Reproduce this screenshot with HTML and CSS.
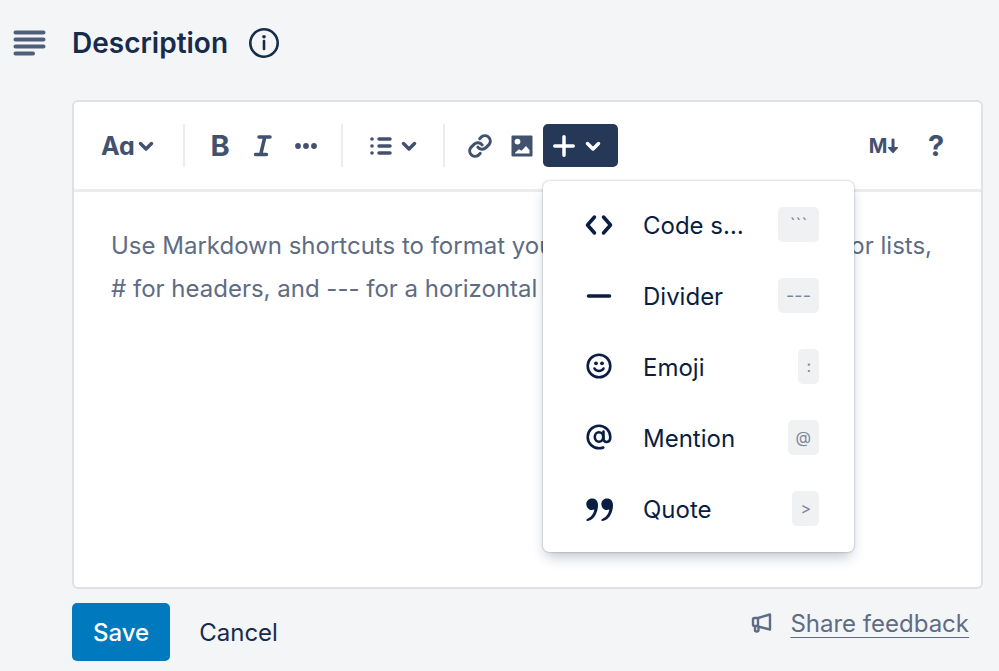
FILE: index.html
```html
<!DOCTYPE html>
<html lang="en">
  <head>
    <meta charset="utf-8">
    <title>Description</title>
    <link rel="stylesheet" href="styles.css">
  </head>
  <body>
    <main class="page">
      <header class="header">
        <svg class="header-icon" width="34" height="28" viewBox="0 0 34 28">
          <path d="M3.500 3.500H31.500M3.500 10.500H31.500M3.500 17.500H31.500M3.500 24.500H21"/>
        </svg>
        <h1><label for="description">Description</label></h1>
        <button type="button" class="info" aria-label="About descriptions">
          <svg width="32" height="32" viewBox="0 0 32 32">
            <circle class="line" cx="16" cy="16" r="13.700"/>
            <path class="line" d="M16 14V22"/>
            <circle cx="16" cy="9.800" r="1.800"/>
          </svg>
        </button>
      </header>

      <section class="content">
        <div class="editor">
          <div class="toolbar">
            <button type="button" class="tool split text-style" aria-label="Text styles">
              <span class="glyph">Aa</span>
              <svg class="chevron" width="16" height="12" viewBox="0 0 16 12"><path d="M2.500 3.500L8 9L13.500 3.500"/></svg>
            </button>
            <span class="separator"></span>
            <div class="group marks">
              <button type="button" class="tool" aria-label="Bold"><span class="glyph bold">B</span></button>
              <button type="button" class="tool" aria-label="Italic">
                <svg class="line" width="22" height="24" viewBox="0 0 22 24"><path d="M7 3H18M3.500 20.500H14.500M12.800 3L8.700 20.500"/></svg>
              </button>
              <button type="button" class="tool" aria-label="More formatting">
                <svg width="24" height="8" viewBox="0 0 24 8"><circle cx="4" cy="4" r="2.900"/><circle cx="12" cy="4" r="2.900"/><circle cx="20" cy="4" r="2.900"/></svg>
              </button>
            </div>
            <span class="separator"></span>
            <button type="button" class="tool split" aria-label="Lists">
              <svg width="22" height="20" viewBox="0 0 22 20">
                <circle cx="2" cy="3" r="1.800"/><circle cx="2" cy="10" r="1.800"/><circle cx="2" cy="17" r="1.800"/>
                <path class="line" d="M9 3H20M9 10H20M9 17H20"/>
              </svg>
              <svg class="chevron" width="16" height="12" viewBox="0 0 16 12"><path d="M2.500 3.500L8 9L13.500 3.500"/></svg>
            </button>
            <span class="separator"></span>
            <div class="group">
              <button type="button" class="tool" aria-label="Link">
                <svg class="link-icon line" width="26" height="26" viewBox="0 0 24 24">
                  <path d="M10 13a5 5 0 0 0 7.500.500l3-3a5 5 0 0 0-7-7l-1.700 1.700M14 11a5 5 0 0 0-7.500-.500l-3 3a5 5 0 0 0 7 7l1.700-1.700"/>
                </svg>
              </button>
              <button type="button" class="tool" aria-label="Image">
                <svg width="22" height="22" viewBox="0 0 22 22">
                  <path fill-rule="evenodd" d="M1.500 .500H20.500Q21.500 .500 21.500 1.500V20.500Q21.500 21.500 20.500 21.500H1.500Q.500 21.500 .500 20.500V1.500Q.500 .500 1.500 .500ZM6.500 3.700A2.900 2.900 0 1 0 6.500 9.500A2.900 2.900 0 1 0 6.500 3.700ZM4 18.500H18.500V15L15 11L10.500 15.800L8 14.200L4 17.700Z"/>
                </svg>
              </button>
            </div>
            <div class="insert">
              <button type="button" class="tool insert-button" aria-label="Insert" aria-expanded="true">
                <svg class="line" width="22" height="22" viewBox="0 0 22 22"><path d="M11 1.800V20.200M1.800 11H20.200"/></svg>
                <svg class="chevron" width="16" height="12" viewBox="0 0 16 12"><path d="M2.500 3.500L8 9L13.500 3.500"/></svg>
              </button>
              <div class="menu">
                <button type="button" class="menu-item">
                  <svg class="line" width="32" height="32" viewBox="0 0 32 32"><path d="M11.500 8L4.500 16L11.500 24M20.500 8L27.500 16L20.500 24"/></svg>
                  <span class="menu-label">Code snippet</span>
                  <kbd class="wide">```</kbd>
                </button>
                <button type="button" class="menu-item">
                  <svg class="line" width="32" height="32" viewBox="0 0 32 32"><path d="M5.500 16H26.500"/></svg>
                  <span class="menu-label">Divider</span>
                  <kbd class="wide">---</kbd>
                </button>
                <button type="button" class="menu-item">
                  <svg width="32" height="32" viewBox="0 0 32 32">
                    <circle class="thin" cx="16" cy="15" r="11.300"/>
                    <circle cx="13" cy="12.300" r="1.900"/><circle cx="19" cy="12.300" r="1.900"/>
                    <path class="thin" d="M11.500 17.500C13.300 20.800 18.700 20.800 20.500 17.500"/>
                  </svg>
                  <span class="menu-label">Emoji</span>
                  <kbd>:</kbd>
                </button>
                <button type="button" class="menu-item">
                  <svg width="32" height="32" viewBox="0 0 32 32">
                    <ellipse class="thin" cx="16" cy="15" rx="4.200" ry="4.700"/>
                    <path class="thin" d="M20.500 9.500V16.500C20.500 21.500 27.300 21.300 27.300 15A11.300 11.300 0 1 0 16 26.300Q18.500 26.300 20.300 25.500"/>
                  </svg>
                  <span class="menu-label">Mention</span>
                  <kbd>@</kbd>
                </button>
                <button type="button" class="menu-item">
                  <svg width="32" height="32" viewBox="0 0 32 32">
                    <path d="M9 5.500C12.800 5.500 15 8.200 15 12C15 20 10.500 27.500 4.500 28C3 28.100 2.900 26.300 4.200 25.900C7.500 24.900 10.500 21.500 11.300 16.600C7 18.200 3.300 15.500 3.300 11.300C3.300 8 5.700 5.500 9 5.500Z"/>
                    <path d="M24 5.500C27.800 5.500 30 8.200 30 12C30 20 25.500 27.500 19.500 28C18 28.100 17.900 26.300 19.200 25.900C22.500 24.900 25.500 21.500 26.300 16.600C22 18.200 18.300 15.500 18.300 11.300C18.300 8 20.700 5.500 24 5.500Z"/>
                  </svg>
                  <span class="menu-label">Quote</span>
                  <kbd>&gt;</kbd>
                </button>
              </div>
            </div>
            <div class="group help">
              <button type="button" class="tool" aria-label="Markdown">
                <span class="glyph markdown">M</span>
                <svg width="12" height="16" viewBox="0 0 12 16"><path d="M4.500 1.500Q4.500 .500 6 .500Q7.500 .500 7.500 1.500V9H10.500Q11.500 9.300 11 10L6.700 14.800Q6 15.500 5.300 14.800L1 10Q.500 9.300 1.500 9H4.500Z"/></svg>
              </button>
              <button type="button" class="tool" aria-label="Help"><span class="glyph question">?</span></button>
            </div>
          </div>
          <textarea id="description" placeholder="Use Markdown shortcuts to format your page as you type, like * for lists, # for headers, and --- for a horizontal rule."></textarea>
        </div>

        <footer class="actions">
          <button type="button" class="save">Save</button>
          <button type="button" class="cancel">Cancel</button>
          <div class="feedback">
            <svg width="22" height="22" viewBox="0 0 22 22"><path d="M7 5L19 1.500V16.500L7 13.500ZM7 5H3.500Q2 5 2 6.500V11.500Q2 13 3.500 13H7M4 13V17Q4 18.500 5.700 18.500Q7.500 18.500 7.500 17V13.500"/></svg>
            <a href="#">Share feedback</a>
          </div>
        </footer>
      </section>
    </main>
  </body>
</html>
```

FILE: styles.css
```css
* {
  box-sizing: border-box;
}

body {
  margin: 0;
  background-color: #f4f5f7;
  color: #172b4d;
  font-family: Inter, "Liberation Sans", sans-serif;
  font-size: 24px;
}

button {
  font: inherit;
  color: inherit;
  background: none;
  border: none;
  padding: 0;
  cursor: pointer;
}

svg {
  display: block;
  flex: none;
  fill: currentColor;
}

.line {
  fill: none;
  stroke: currentColor;
  stroke-width: 3.5;
  stroke-linecap: round;
  stroke-linejoin: round;
}

.page {
  padding: 25px 16px 10px 12px;
}

.header {
  display: flex;
  align-items: center;
  height: 36px;
}

.header-icon {
  margin-right: 26px;
  color: #505f79;
  stroke: currentColor;
  stroke-width: 4;
  stroke-linecap: round;
}

h1 {
  margin: 0;
  font-size: 28px;
  line-height: 36px;
  font-weight: 600;
}

.info {
  margin-left: 20px;
}

.info .line {
  stroke-width: 2.6;
}

.content {
  margin: 39px 0 0 60px;
}

.editor {
  background-color: #ffffff;
  border: 2px solid #dfe1e6;
  border-radius: 6px;
}

.toolbar {
  display: flex;
  align-items: center;
  height: 90px;
  padding: 0 24px 0 23px;
  border-bottom: 3px solid #ebecf0;
  color: #42526e;
}

.group {
  display: flex;
}

.marks {
  gap: 1px;
}

.tool {
  display: flex;
  align-items: center;
  justify-content: center;
  width: 42px;
  height: 43px;
  border-radius: 5px;
}

.split {
  width: 72px;
  gap: 9px;
}

.text-style {
  justify-content: flex-start;
  gap: 3px;
  padding-left: 4px;
  font-size: 25px;
  font-feature-settings: "cv11";
}

.chevron {
  fill: none;
  stroke: currentColor;
  stroke-width: 3.5;
  stroke-linecap: round;
  stroke-linejoin: round;
}

.link-icon {
  stroke-width: 2.8;
}

.separator {
  width: 2px;
  height: 43px;
  margin: 0 14px;
  background-color: #ebecf0;
}

.glyph {
  font-weight: 700;
  line-height: 30px;
}

.bold,
.question {
  font-size: 29px;
}

.markdown {
  font-size: 20px;
}

.insert {
  position: relative;
}

.insert-button {
  justify-content: flex-start;
  width: 75px;
  gap: 10px;
  padding-left: 10px;
  background-color: #253858;
  color: #ffffff;
}

.help {
  gap: 10px;
  margin-left: auto;
}

.menu {
  position: absolute;
  top: 57px;
  left: 0;
  width: 311px;
  padding: 8px 0;
  background-color: #ffffff;
  border-radius: 6px;
  box-shadow: 0 7px 14px -3px rgba(9, 30, 66, 0.28), 0 0 2px rgba(9, 30, 66, 0.4);
  color: #091e42;
}

.menu-item {
  display: flex;
  align-items: center;
  width: 100%;
  height: 71px;
  padding: 0 35px 0 40px;
  text-align: left;
}

.menu-label {
  flex: 1;
  min-width: 0;
  margin: 0 31px 0 28px;
  padding-top: 2px;
  overflow: hidden;
  text-overflow: ellipsis;
  white-space: nowrap;
}

.thin {
  fill: none;
  stroke: currentColor;
  stroke-width: 2.6;
  stroke-linecap: round;
}

kbd {
  min-width: 20px;
  padding: 0 8px;
  border-radius: 5px;
  background-color: #f0f1f3;
  color: #7a869a;
  font-family: inherit;
  font-size: 16px;
  line-height: 35px;
  text-align: center;
}

kbd.wide {
  min-width: 41px;
  font-size: 18px;
}

textarea {
  display: block;
  width: 100%;
  height: 395px;
  padding: 32px 37px;
  border: none;
  outline: none;
  resize: none;
  background: none;
  color: inherit;
  font: inherit;
  line-height: 43px;
}

textarea::placeholder {
  color: #5e6c84;
  opacity: 1;
}

.actions {
  display: flex;
  align-items: flex-start;
  margin-top: 14px;
}

.save {
  height: 58px;
  padding: 0 21px;
  border-radius: 5px;
  background-color: #0079bf;
  color: #ffffff;
  font-weight: 500;
}

.cancel {
  height: 58px;
  margin-left: 29px;
}

.feedback {
  display: flex;
  align-items: center;
  gap: 17px;
  height: 41px;
  margin: 0 14px 0 auto;
  color: #5e6c84;
}

.feedback svg {
  fill: none;
  stroke: currentColor;
  stroke-width: 2.4;
  stroke-linejoin: round;
}

.feedback a {
  color: inherit;
  text-decoration: underline;
  text-decoration-thickness: 1px;
  text-underline-offset: 5px;
}
```
